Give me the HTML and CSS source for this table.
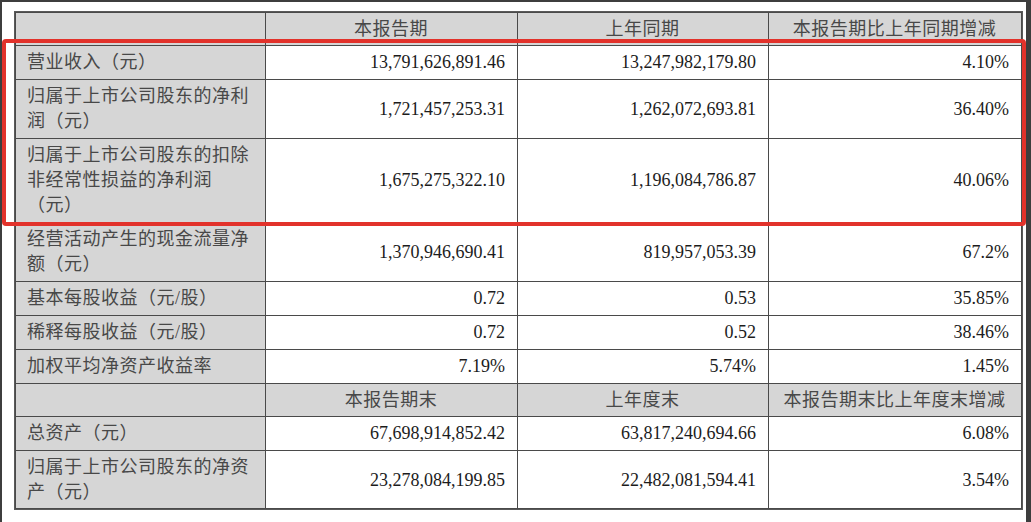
FILE: index.html
```html
<!DOCTYPE html>
<html lang="zh-CN">
<head>
<meta charset="utf-8">
<title>主要会计数据</title>
<link rel="stylesheet" href="styles.css">
</head>
<body>
<div class="frame">
  <table class="fin">
    <colgroup>
      <col class="c1"><col class="c2"><col class="c3"><col class="c4">
    </colgroup>
    <tr class="head">
      <td class="label"></td>
      <td class="hd">本报告期</td>
      <td class="hd">上年同期</td>
      <td class="hd">本报告期比上年同期增减</td>
    </tr>
    <tr>
      <td class="label">营业收入（元）</td>
      <td class="num">13,791,626,891.46</td>
      <td class="num">13,247,982,179.80</td>
      <td class="num">4.10%</td>
    </tr>
    <tr>
      <td class="label">归属于上市公司股东的净利润（元）</td>
      <td class="num">1,721,457,253.31</td>
      <td class="num">1,262,072,693.81</td>
      <td class="num">36.40%</td>
    </tr>
    <tr>
      <td class="label">归属于上市公司股东的扣除非经常性损益的净利润（元）</td>
      <td class="num">1,675,275,322.10</td>
      <td class="num">1,196,084,786.87</td>
      <td class="num">40.06%</td>
    </tr>
    <tr>
      <td class="label">经营活动产生的现金流量净额（元）</td>
      <td class="num">1,370,946,690.41</td>
      <td class="num">819,957,053.39</td>
      <td class="num">67.2%</td>
    </tr>
    <tr>
      <td class="label">基本每股收益（元/股）</td>
      <td class="num">0.72</td>
      <td class="num">0.53</td>
      <td class="num">35.85%</td>
    </tr>
    <tr>
      <td class="label">稀释每股收益（元/股）</td>
      <td class="num">0.72</td>
      <td class="num">0.52</td>
      <td class="num">38.46%</td>
    </tr>
    <tr>
      <td class="label">加权平均净资产收益率</td>
      <td class="num">7.19%</td>
      <td class="num">5.74%</td>
      <td class="num">1.45%</td>
    </tr>
    <tr class="head">
      <td class="label"></td>
      <td class="hd">本报告期末</td>
      <td class="hd">上年度末</td>
      <td class="hd">本报告期末比上年度末增减</td>
    </tr>
    <tr>
      <td class="label">总资产（元）</td>
      <td class="num">67,698,914,852.42</td>
      <td class="num">63,817,240,694.66</td>
      <td class="num">6.08%</td>
    </tr>
    <tr class="last">
      <td class="label">归属于上市公司股东的净资产（元）</td>
      <td class="num">23,278,084,199.85</td>
      <td class="num">22,482,081,594.41</td>
      <td class="num">3.54%</td>
    </tr>
  </table>
  <div class="highlight"></div>
</div>
</body>
</html>
```
FILE: styles.css
```css
html, body {
  margin: 0;
  padding: 0;
  background: #ffffff;
}

.frame {
  position: relative;
  box-sizing: border-box;
  height: 522px;
  border-top: 2px solid #3d3d3d;
  border-left: 2px solid #3d3d3d;
  border-right: 5px solid #3d3d3d;
  padding: 10px 0 0 13px;
  background: #ffffff;
}

.fin {
  border-collapse: collapse;
  table-layout: fixed;
  width: 1006px;
  font-family: "Liberation Serif", "Noto Sans CJK SC", serif;
  font-size: 18px;
  line-height: 25px;
  color: #1c1c1c;
  outline: 1px solid #5a5a5a;
}

.c1 { width: 250px; }
.c2 { width: 252px; }
.c3 { width: 251px; }
.c4 { width: 253px; }

.fin td {
  border: 1px solid #4a4a4a;
  padding: 4px 12px 4px 11px;
  vertical-align: middle;
  height: 25px;
}

.fin .head td {
  background: #d6d6d6;
  padding-top: 4px;
  padding-bottom: 3px;
}

.fin .last td {
  padding-bottom: 3px;
}

.label {
  background: #d6d6d6;
  color: #484848;
  letter-spacing: 0.5px;
  text-align: left;
}

.hd {
  color: #484848;
  letter-spacing: 0.5px;
  text-align: center;
}

.num {
  text-align: right;
  background: #ffffff;
}

.highlight {
  position: absolute;
  left: 0;
  top: 37px;
  width: 1024px;
  height: 187px;
  box-sizing: border-box;
  border: 4px solid #e2322b;
  border-radius: 4px;
  pointer-events: none;
}
```
